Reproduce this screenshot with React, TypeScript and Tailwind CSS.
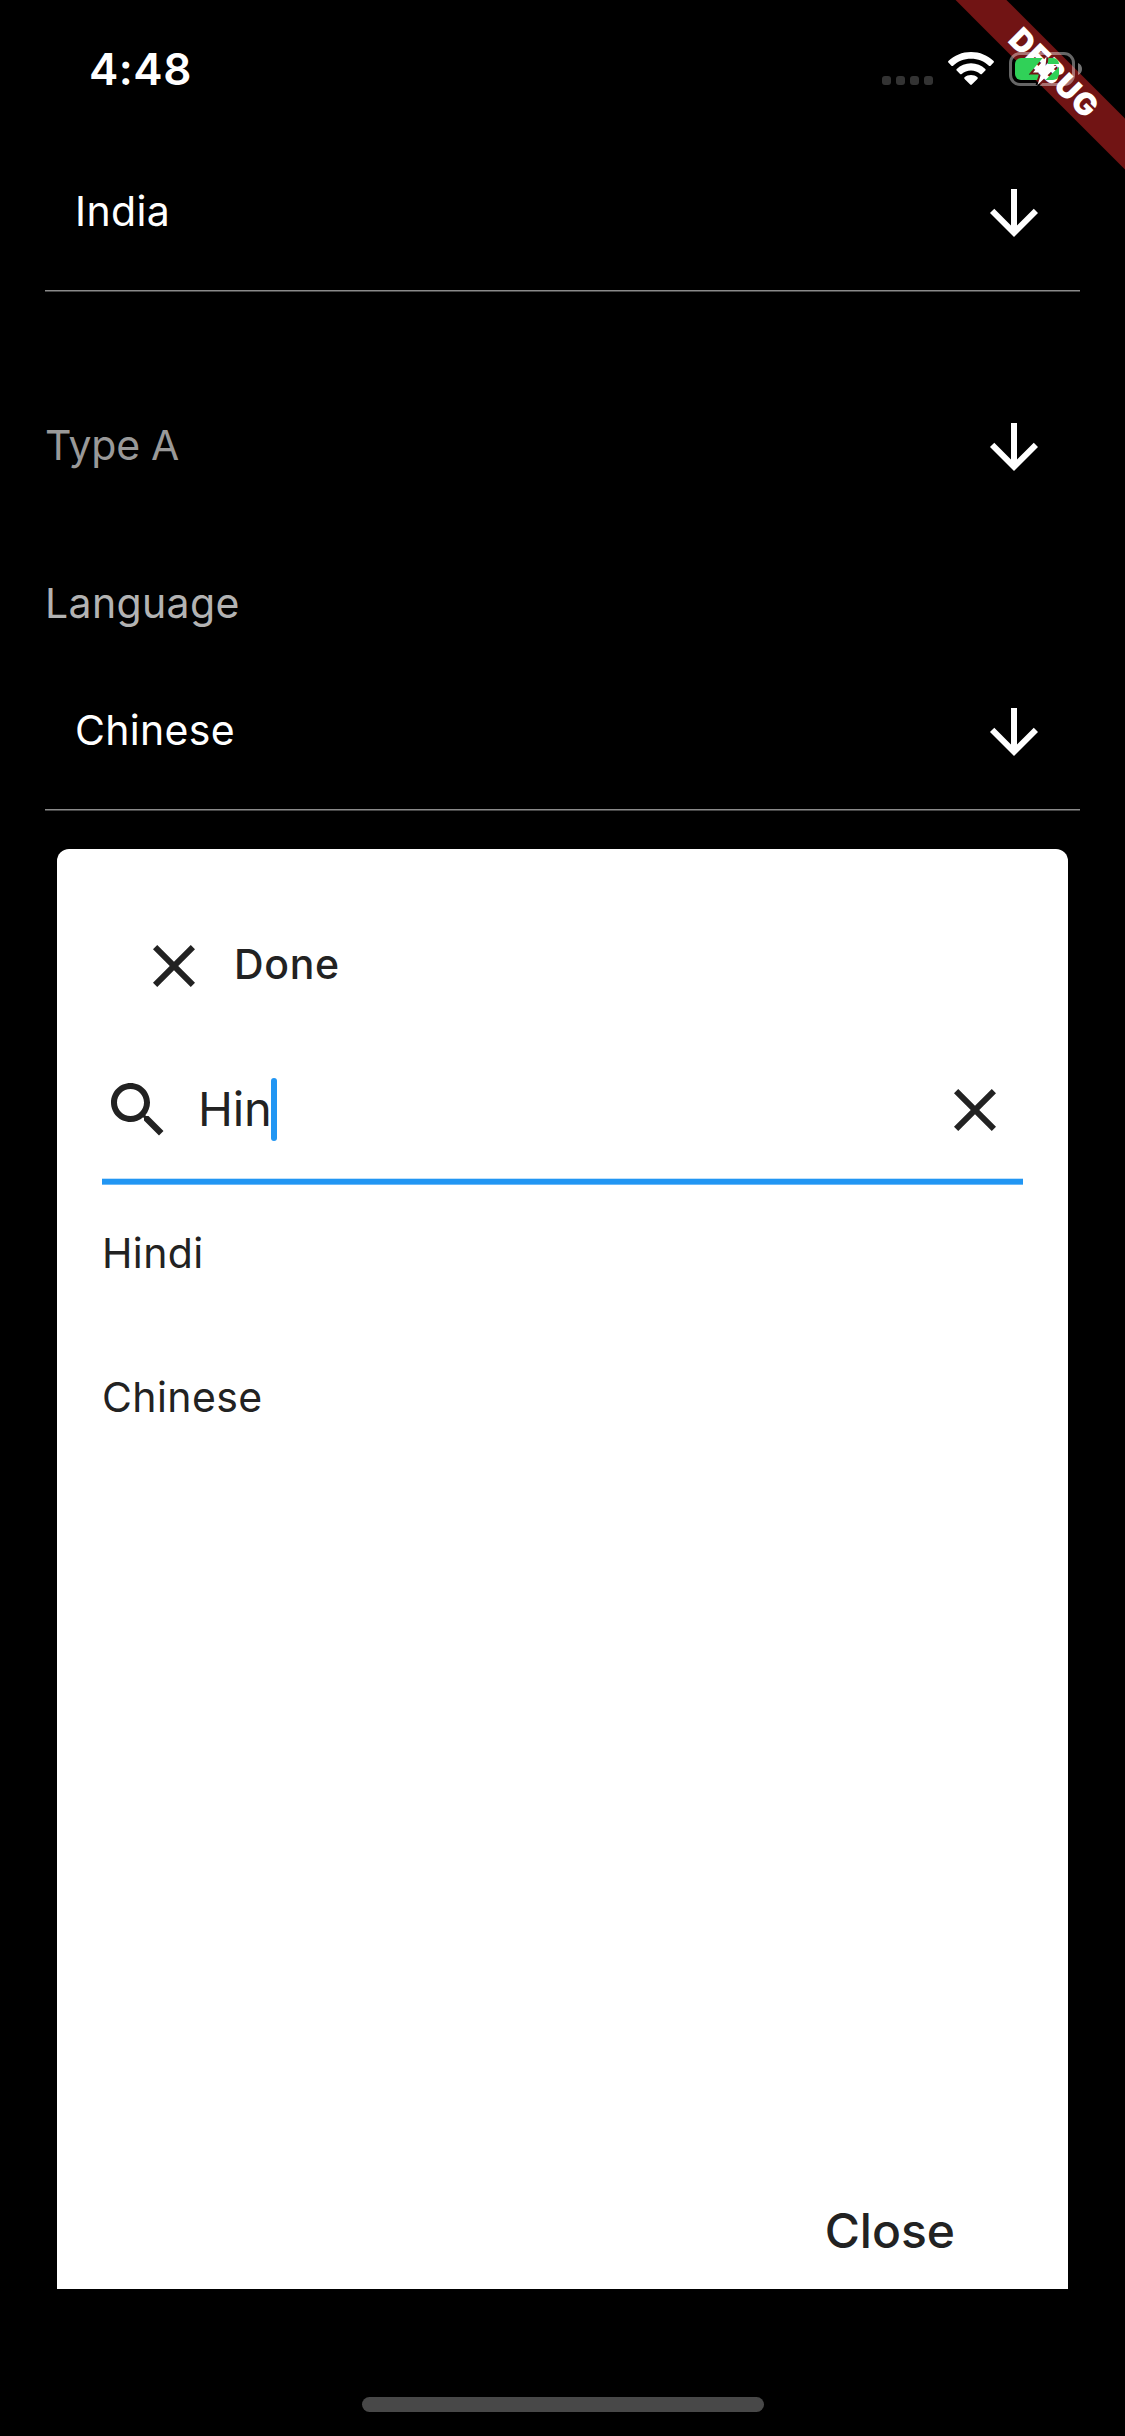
import type { ReactNode } from "react";

const ICONS = {
  arrowDown: "M20 12l-1.41-1.41L13 16.17V4h-2v12.17l-5.58-5.59L4 12l8 8 8-8z",
  close:
    "M19 6.41L17.59 5 12 10.59 6.41 5 5 6.41 10.59 12 5 17.59 6.41 19 12 13.41 17.59 19 19 17.59 13.41 12z",
  search:
    "M15.5 14h-.79l-.28-.27C15.41 12.59 16 11.11 16 9.5 16 5.91 13.09 3 9.5 3S3 5.91 3 9.5 5.91 16 9.5 16c1.61 0 3.09-.59 4.23-1.57l.27.28v.79l5 4.99L20.49 19l-4.99-5zm-6 0C7.01 14 5 11.99 5 9.5S7.01 5 9.5 5 14 7.01 14 9.5 11.99 14 9.5 14z",
};

function Icon({ name }: { name: keyof typeof ICONS }) {
  return (
    <svg viewBox="0 0 24 24" className="size-[72px] shrink-0 fill-current">
      <path d={ICONS[name]} />
    </svg>
  );
}

function Wifi() {
  return (
    <svg viewBox="0 0 46 34" className="h-[34px] w-[46px]" fill="#fff">
      <path d="M23 0C14.2 0 6.200 3.400 0.400 8.900c-.5.500-.5 1.200 0 1.700l3 3.100c.5.500 1.200.5 1.700 0C9.700 9.300 16 6.700 23 6.700s13.300 2.600 17.900 7c.5.500 1.200.500 1.700 0l3-3.100c.5-.5.5-1.200 0-1.700C39.800 3.400 31.800 0 23 0z" />
      <path d="M23 11.300c-5.500 0-10.500 2.100-14.300 5.600-.5.500-.5 1.200 0 1.700l3.400 3.400c.4.400 1.100.5 1.600 0 2.500-2.200 5.700-3.600 9.300-3.600s6.800 1.400 9.300 3.600c.5.500 1.200.400 1.600 0l3.400-3.400c.5-.5.500-1.200 0-1.700-3.800-3.500-8.800-5.600-14.300-5.600z" />
      <path d="M23 23c-2.500 0-4.700.9-6.400 2.300-.5.400-.5 1.200 0 1.600l5.600 5.700c.5.500 1.100.5 1.600 0l5.600-5.700c.5-.4.5-1.200 0-1.600C27.700 23.900 25.500 23 23 23z" />
    </svg>
  );
}

function Battery() {
  const bolt = "M37.500 4.500L24 20.500h8.500L28.500 33 48 14h-11.500z";
  return (
    <svg viewBox="0 0 74 34" className="h-[34px] w-[74px]">
      <mask id="bolt-gap">
        <rect width="74" height="34" fill="#fff" />
        <path d={bolt} fill="#000" stroke="#000" strokeWidth="4" />
      </mask>
      <g mask="url(#bolt-gap)">
        <rect x="1.500" y="1.500" width="63" height="31" rx="9.500" fill="none" stroke="#fff" strokeOpacity="0.4" strokeWidth="3" />
        <rect x="6" y="6" width="44" height="22" rx="6" fill="#30d158" />
      </g>
      <path d="M69 11c2.500 1 4 3.300 4 6s-1.500 5-4 6z" fill="#fff" fillOpacity="0.45" />
      <path d={bolt} fill="#fff" />
    </svg>
  );
}

function DebugBanner() {
  return (
    <div className="absolute top-0 right-0 size-[170px] overflow-hidden">
      <div className="absolute top-[54px] left-[-102px] flex h-9 w-[400px] rotate-45 items-center justify-center bg-[#711414] pl-[3px] text-[31px] font-black tracking-[0.8px] text-white">
        DEBUG
      </div>
    </div>
  );
}

function StatusBar() {
  return (
    <header className="flex h-[138px] items-center justify-between pr-[42px] pl-[89px]">
      <time className="text-[44px] leading-none font-semibold tracking-[0.5px] text-white">4:48</time>
      <div className="relative z-10 flex items-center">
        <div className="mt-[23px] flex gap-[5px]">
          {[0, 1, 2, 3].map((dot) => (
            <i key={dot} className="size-[9px] rounded-[3px] bg-[#333]" />
          ))}
        </div>
        <div className="ml-[15px]"><Wifi /></div>
        <div className="ml-[15px]"><Battery /></div>
      </div>
    </header>
  );
}

function SelectRow({ children, className }: { children: ReactNode; className: string }) {
  return (
    <div className={"flex items-center justify-between pr-[30px] text-[41px] " + className}>
      <span className="pb-[3px]">{children}</span>
      <Icon name="arrowDown" />
    </div>
  );
}

function Divider() {
  return <div className="mt-0.5 h-0.5 border-t border-b border-t-[#8a8a8a] border-b-[#454545]" />;
}

export default function App() {
  return (
    <div className="relative flex h-[2436px] w-[1125px] flex-col overflow-hidden bg-black font-['Inter',sans-serif] text-white">
      <DebugBanner />
      <StatusBar />
      <main className="px-[45px]">
        <SelectRow className="h-[150px] pl-[30px] tracking-[0.4px]">India</SelectRow>
        <Divider />
        <SelectRow className="mt-[85px] h-[140px] tracking-[-0.3px]">
          <span className="text-[#999]">Type A</span>
        </SelectRow>
        <div className="mt-[61px] text-[41px] leading-[50px] tracking-[0.35px] text-[#b3b3b3]">
          <span>Language</span>
        </div>
        <SelectRow className="mt-[29px] h-[150px] pl-[30px] tracking-[0.3px]">Chinese</SelectRow>
        <Divider />
      </main>
      <section className="mx-[57px] mt-[38px] flex h-[1440px] flex-col rounded-t-xl bg-white px-[45px] pt-[81px] text-[#222]">
        <div className="flex h-[72px] items-center gap-6 pl-9">
          <Icon name="close" />
          <span className="pb-0.5 text-[41px] font-medium tracking-[0.7px]">Done</span>
        </div>
        <div className="mt-[72px] flex h-[72px] items-center">
          <Icon name="search" />
          <span className="ml-6 pb-0.5 text-[47px] tracking-[-0.1px]">Hin</span>
          <i className="-ml-px mb-0.5 h-[63px] w-1.5 rounded-sm bg-[#2196f3]" />
          <div className="mr-3 ml-auto"><Icon name="close" /></div>
        </div>
        <div className="mt-8 h-[7px] border-t border-b border-t-[#bfe0fb] border-b-[#6bb8f7] bg-[#2196f3]" />
        <ul className="mt-[38px] flex flex-col gap-[84px] text-[41px] leading-[60px] tracking-[0.4px]">
          <li>Hindi</li>
          <li>Chinese</li>
        </ul>
        <button className="mt-auto mr-[68px] mb-[28px] self-end text-[48px] leading-[60px] font-medium">Close</button>
      </section>
      <footer className="mt-[108px] h-[15px] w-[402px] self-center rounded-full bg-[#484848]" />
    </div>
  );
}
